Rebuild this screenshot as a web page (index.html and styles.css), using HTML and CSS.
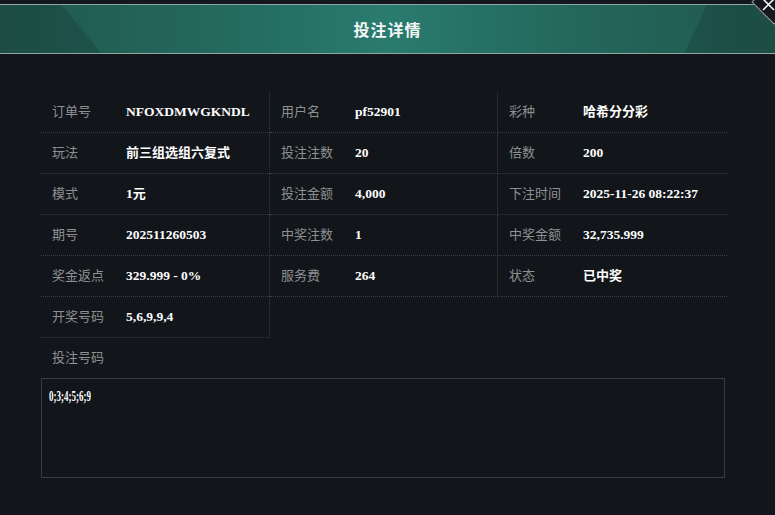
FILE: index.html
```html
<!DOCTYPE html>
<html lang="zh-CN">
<head>
  <meta charset="UTF-8">
  <title>投注详情</title>
  <link rel="stylesheet" href="styles.css">
</head>
<body>
  <div class="dialog">
    <!-- En-tête -->
    <div class="dialog-head">
      <span class="dialog-title">投注详情</span>
      <button class="btn-close" aria-label="关闭">
        <svg width="13" height="13" viewBox="0 0 13 13"><path d="M1 1L12 12M12 1L1 12" stroke="#fff" stroke-width="1.5" fill="none"/></svg>
      </button>
    </div>
    <div class="dialog-body">
      <div class="info-grid">
        <div class="info-cell"><span class="info-label">订单号</span><span class="info-value">NFOXDMWGKNDL</span></div>
        <div class="info-cell"><span class="info-label">用户名</span><span class="info-value">pf52901</span></div>
        <div class="info-cell"><span class="info-label">彩种</span><span class="info-value cjk">哈希分分彩</span></div>
        <div class="info-cell"><span class="info-label">玩法</span><span class="info-value cjk">前三组选组六复式</span></div>
        <div class="info-cell"><span class="info-label">投注注数</span><span class="info-value">20</span></div>
        <div class="info-cell"><span class="info-label">倍数</span><span class="info-value">200</span></div>
        <div class="info-cell"><span class="info-label">模式</span><span class="info-value">1<span class="cjk">元</span></span></div>
        <div class="info-cell"><span class="info-label">投注金额</span><span class="info-value">4,000</span></div>
        <div class="info-cell"><span class="info-label">下注时间</span><span class="info-value">2025-11-26 08:22:37</span></div>
        <div class="info-cell"><span class="info-label">期号</span><span class="info-value">202511260503</span></div>
        <div class="info-cell"><span class="info-label">中奖注数</span><span class="info-value">1</span></div>
        <div class="info-cell"><span class="info-label">中奖金额</span><span class="info-value">32,735.999</span></div>
        <div class="info-cell"><span class="info-label">奖金返点</span><span class="info-value">329.999 - 0%</span></div>
        <div class="info-cell"><span class="info-label">服务费</span><span class="info-value">264</span></div>
        <div class="info-cell"><span class="info-label">状态</span><span class="info-value cjk">已中奖</span></div>
        <div class="info-cell"><span class="info-label">开奖号码</span><span class="info-value">5,6,9,9,4</span></div>
      </div>
      <div class="codes-label">投注号码</div>
      <div class="codes-box"><span class="codes-text">0;3;4;5;6;9</span></div>
    </div>
  </div>
</body>
</html>
```

FILE: styles.css
```css
body {
  margin: 0;
  background: #121519;
  font-family: "Noto Sans CJK SC", sans-serif;
  color: #fff;
  overflow: hidden;
}
.dialog {
  padding-top: 4px;
  background: linear-gradient(#14171e 0, #14171e 4px, #121519 4px);
  min-height: 511px;
}
.dialog-head {
  position: relative;
  height: 48px;
  border-top: 1px solid #8fa8a4;
  border-bottom: 1px solid #8fa8a4;
  background: linear-gradient(90deg, #21574d 0%, #246a5f 30%, #2a7b6f 50%, #246a5f 70%, #21574d 100%);
  display: flex;
  align-items: center;
  justify-content: center;
}
.dialog-head::before,
.dialog-head::after {
  content: "";
  position: absolute;
  top: 0;
  bottom: 0;
  width: 110px;
  background: rgba(12,30,28,0.18);
}
.dialog-head::before {
  left: 0;
  clip-path: polygon(0 0, 56% 0, 92% 100%, 0 100%);
}
.dialog-head::after {
  right: 0;
  clip-path: polygon(38% 0, 100% 0, 100% 100%, 18% 100%);
}
.dialog-title {
  font-size: 16px;
  font-weight: bold;
  letter-spacing: 1px;
  color: #f4f7f6;
  position: relative;
  z-index: 1;
}
.btn-close {
  position: absolute;
  top: -19px;
  right: -15px;
  width: 32px;
  height: 32px;
  padding: 0;
  border: none;
  background: none;
  cursor: pointer;
  z-index: 2;
}
.btn-close::before {
  content: "";
  position: absolute;
  inset: 0;
  border: 1px solid #9aa3a8;
  background: #15181d;
  transform: rotate(45deg);
}
.btn-close svg {
  position: absolute;
  left: 4px;
  top: 12px;
}
.dialog-body {
  padding: 38px 48px 0 41px;
}
.info-grid {
  display: grid;
  grid-template-columns: 229px 228px 229px;
}
.info-cell {
  height: 40px;
  line-height: 35px;
  border-bottom: 1px dotted #3a3d43;
  border-right: 1px dotted #3a3d43;
  padding-left: 11px;
  white-space: nowrap;
}
.info-cell:nth-child(3n) {
  border-right: none;
}
.info-label {
  display: inline-block;
  width: 74px;
  font-size: 13px;
  color: #8e9093;
}
.info-value {
  font-family: "Liberation Serif", "Noto Sans CJK SC", serif;
  font-size: 13.5px;
  font-weight: bold;
  color: #fff;
}
.info-value.cjk,
.info-value .cjk {
  font-family: "Noto Sans CJK SC", sans-serif;
  font-size: 13px;
}
.codes-label {
  height: 40px;
  line-height: 38px;
  padding-left: 11px;
  font-size: 13px;
  color: #8e9093;
}
.codes-box {
  width: 684px;
  height: 100px;
  border: 1px solid #383b40;
  padding: 6px 7px;
  box-sizing: border-box;
  line-height: 18px;
}
.codes-text {
  display: inline-block;
  font-family: "Liberation Serif", serif;
  font-size: 15px;
  font-weight: bold;
  transform: scaleX(0.6);
  transform-origin: left center;
}
```
